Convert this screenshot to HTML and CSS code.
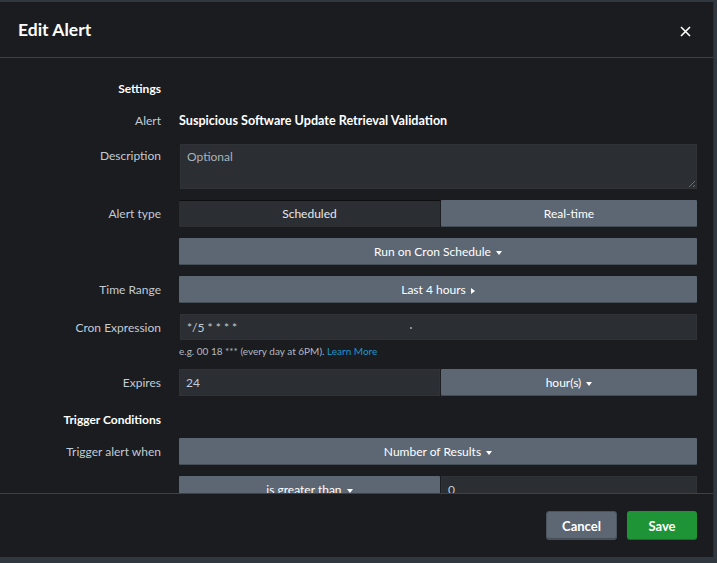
FILE: index.html
```html
<!DOCTYPE html>
<html lang="en">
<head>
    <meta charset="UTF-8">
    <meta name="viewport" content="width=device-width, initial-scale=1.0">
    <title>Edit Alert</title>
    <link rel="stylesheet" href="styles.css">
</head>
<body>
    <div class="modal">
        <!-- Header -->
        <header class="modal-header">
            <h1>Edit Alert</h1>
            <button class="close" aria-label="Close">
                <svg width="11" height="11" viewBox="0 0 11 11"><path d="M1 1L10 10M10 1L1 10" stroke="#fff" stroke-width="1.6" fill="none"/></svg>
            </button>
        </header>

        <!-- Form body -->
        <div class="modal-body">
            <div class="row heading-row">
                <div class="label strong">Settings</div>
            </div>
            <div class="row alert-row">
                <div class="label">Alert</div>
                <div class="control value">Suspicious Software Update Retrieval Validation</div>
            </div>
            <div class="row">
                <div class="label top">Description</div>
                <div class="control">
                    <div class="textarea">Optional<span class="grip"></span></div>
                </div>
            </div>
            <div class="row">
                <div class="label">Alert type</div>
                <div class="control split">
                    <button class="btn pressed">Scheduled</button>
                    <button class="btn">Real-time</button>
                </div>
            </div>
            <div class="row">
                <div class="label"></div>
                <div class="control">
                    <button class="btn full">Run on Cron Schedule <span class="caret-down"></span></button>
                </div>
            </div>
            <div class="row">
                <div class="label">Time Range</div>
                <div class="control">
                    <button class="btn full">Last 4 hours <span class="caret-right"></span></button>
                </div>
            </div>
            <div class="row cron-row">
                <div class="label">Cron Expression</div>
                <div class="control">
                    <div class="input">*/5 * * * *<span class="speck"></span></div>
                </div>
            </div>
            <div class="row help-row">
                <div class="label"></div>
                <div class="control help">e.g. 00 18 *** (every day at 6PM). <a href="#">Learn More</a></div>
            </div>
            <div class="row">
                <div class="label">Expires</div>
                <div class="control split">
                    <div class="input">24</div>
                    <button class="btn">hour(s) <span class="caret-down"></span></button>
                </div>
            </div>
            <div class="row heading-row">
                <div class="label strong">Trigger Conditions</div>
            </div>
            <div class="row">
                <div class="label">Trigger alert when</div>
                <div class="control">
                    <button class="btn full">Number of Results <span class="caret-down"></span></button>
                </div>
            </div>
            <div class="row">
                <div class="label"></div>
                <div class="control split">
                    <button class="btn">is greater than <span class="caret-down"></span></button>
                    <div class="input">0</div>
                </div>
            </div>
        </div>

        <!-- Footer -->
        <footer class="modal-footer">
            <button class="btn cancel">Cancel</button>
            <button class="btn save">Save</button>
        </footer>
    </div>
</body>
</html>
```

FILE: styles.css
```css
/* General */
body, html {
    margin: 0;
    padding: 0;
    background: #31373e;
    font-family: Lato, "Open Sans", sans-serif;
    font-size: 12px;
    color: #c3cbd4;
}

button {
    font-family: inherit;
    font-size: 12px;
    cursor: pointer;
}

/* Modal shell */
.modal {
    margin-top: 2px;
    width: 713px;
    height: 555px;
    background: #1a1c20;
    border-right: 1px solid #2a2f35;
    display: flex;
    flex-direction: column;
}

.modal-header {
    height: 55px;
    flex-shrink: 0;
    border-bottom: 1px solid #3a424b;
    display: flex;
    align-items: center;
    justify-content: space-between;
    padding: 0 22px 0 18px;
}

.modal-header h1 {
    margin: 0;
    font-size: 17.5px;
    font-weight: 700;
    color: #fff;
}

.close {
    background: none;
    border: none;
    padding: 0;
    margin-top: 4px;
    line-height: 0;
}

/* Body */
.modal-body {
    flex: 1;
    overflow: hidden;
    padding: 18px 16px 0 0;
}

.row {
    display: flex;
    margin-bottom: 11px;
}

.label {
    width: 161px;
    flex-shrink: 0;
    padding-right: 18px;
    text-align: right;
    line-height: 27px;
}

.label.top {
    line-height: 24px;
}

.strong {
    font-weight: 700;
    color: #fff;
}

.heading-row {
    margin-bottom: 5px;
}

.heading-row .label {
    line-height: 26px;
}

.alert-row {
    margin-bottom: 10px;
}

.control {
    flex: 1;
}

.value {
    line-height: 27px;
    font-size: 12.6px;
    font-weight: 700;
    color: #fff;
}

.split {
    display: flex;
}

.split > :first-child {
    width: 261px;
    flex-shrink: 0;
    margin-right: 1px;
}

.split > :last-child {
    flex: 1;
}

/* Inputs */
.textarea, .input {
    position: relative;
    box-sizing: border-box;
    background: #2b2f33;
    border: 1px solid #2f3338;
    color: #c3cbd4;
    padding: 0 6px;
    font-size: 12px;
}

.textarea {
    margin-left: 1px;
    height: 45px;
    padding-top: 5px;
    line-height: 14px;
    color: #a9b1b9;
}

.grip {
    position: absolute;
    right: 1px;
    bottom: 1px;
    width: 9px;
    height: 9px;
    background: repeating-linear-gradient(135deg, transparent 0 2px, #6b7178 2px 3px);
    clip-path: polygon(100% 0, 100% 100%, 0 100%);
}

.input {
    height: 27px;
    line-height: 25px;
}

.cron-row {
    margin-bottom: 2px;
}

.cron-row .input {
    height: 26px;
    margin-left: 1px;
}

.speck {
    position: absolute;
    left: 229px;
    top: 12px;
    width: 2px;
    height: 2px;
    background: #8a9096;
}

.help-row {
    margin-bottom: 10px;
}

.help-row .label {
    line-height: 16px;
}

.help {
    font-size: 10px;
    line-height: 16px;
    color: #b3bac2;
}

.help a {
    color: #1f95c9;
    text-decoration: none;
}

/* Buttons */
.btn {
    box-sizing: border-box;
    height: 27px;
    border: none;
    border-radius: 1px;
    background: #5c6773;
    color: #fff;
    box-shadow: inset 0 -1px 0 rgba(0, 0, 0, 0.25);
    padding: 0 8px;
}

.btn.full {
    width: 100%;
}

.btn.pressed {
    background: #2b2f33;
    box-shadow: inset 0 1px 0 #0c0e10;
    color: #e5e9ed;
}

.caret-down, .caret-right {
    display: inline-block;
    width: 0;
    height: 0;
    vertical-align: middle;
    margin-left: 2px;
}

.caret-down {
    border-left: 3.5px solid transparent;
    border-right: 3.5px solid transparent;
    border-top: 4px solid #fff;
}

.caret-right {
    border-top: 3.5px solid transparent;
    border-bottom: 3.5px solid transparent;
    border-left: 4px solid #fff;
}

/* Footer */
.modal-footer {
    height: 64px;
    flex-shrink: 0;
    border-top: 1px solid #3a424b;
    display: flex;
    justify-content: flex-end;
    align-items: flex-start;
    gap: 10px;
    padding: 17px 16px 0 0;
    box-sizing: border-box;
}

.cancel, .save {
    height: 29px;
    border-radius: 3px;
    font-size: 13px;
    font-weight: 700;
    padding: 0;
}

.cancel {
    width: 71px;
    background: #5c6773;
    border: 1px solid #4b545e;
}

.save {
    width: 70px;
    background: #1f9437;
}
```
